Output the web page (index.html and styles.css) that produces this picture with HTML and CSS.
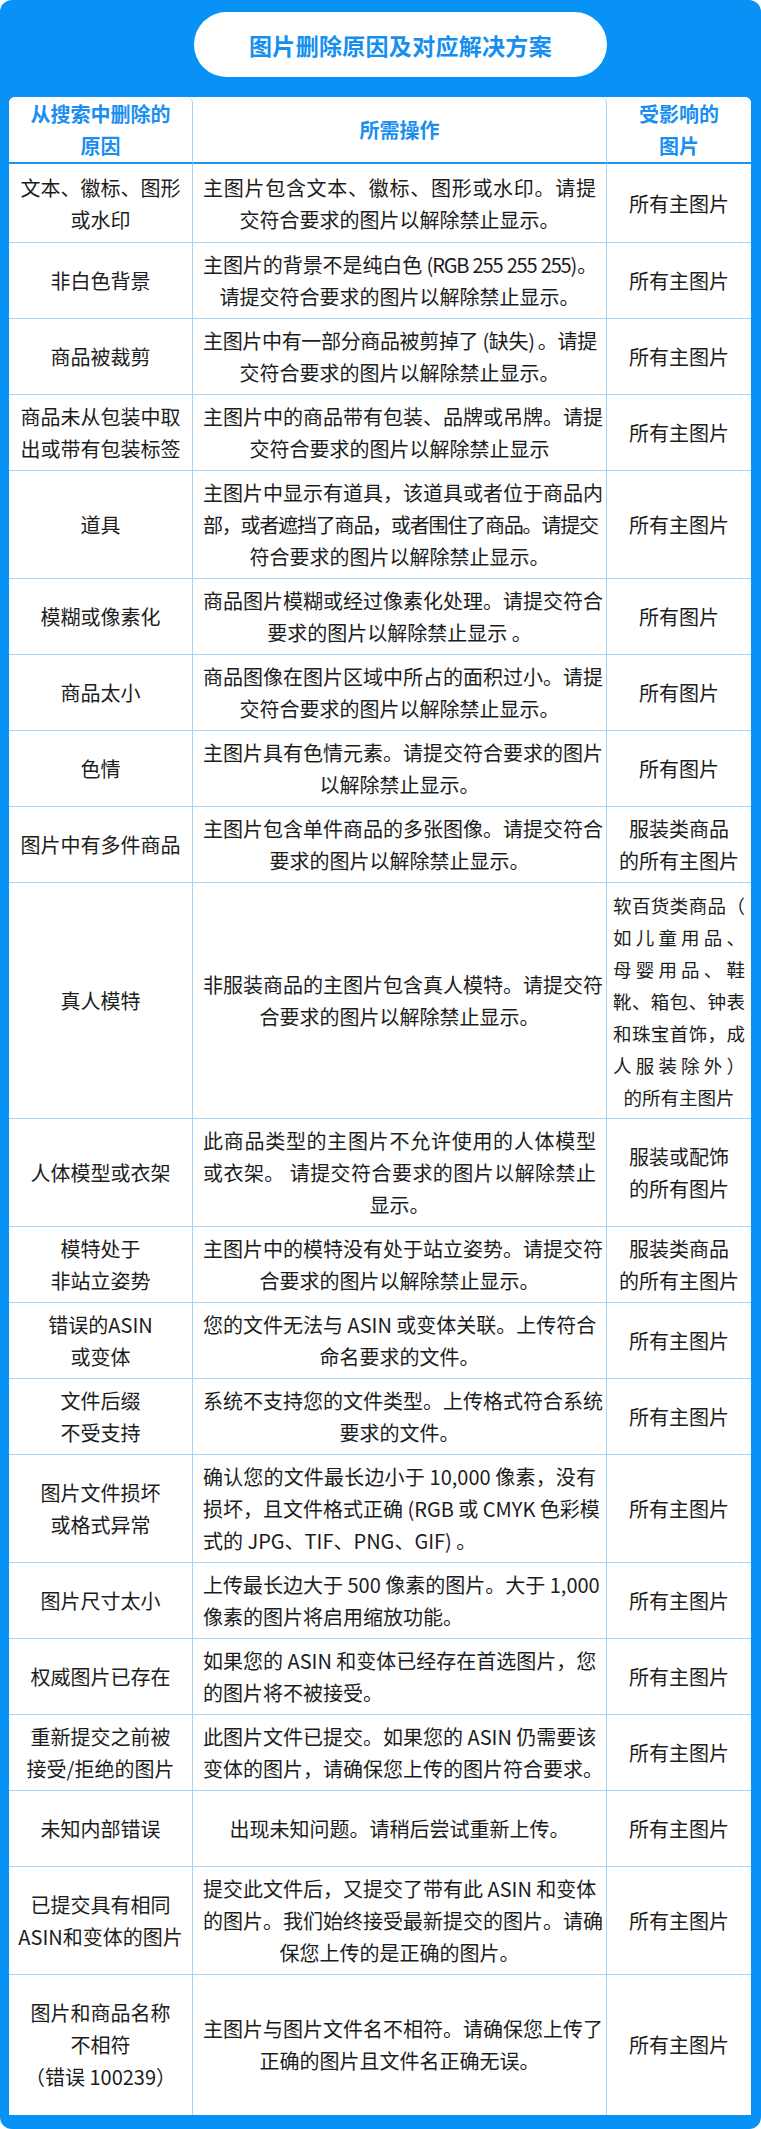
FILE: index.html
```html
<!DOCTYPE html>
<html lang="zh-CN">
<head>
<meta charset="utf-8">
<title>图片删除原因及对应解决方案</title>
<link rel="stylesheet" href="styles.css">
</head>
<body>
<div class="frame">
  <div class="title-row">
    <div class="pill">图片删除原因及对应解决方案</div>
  </div>
  <div class="table">
    <div class="row head">
      <div class="cell c1">从搜索中删除的<br>原因</div>
      <div class="cell c2">所需操作</div>
      <div class="cell c3">受影响的<br>图片</div>
    </div>

    <div class="row r1">
      <div class="cell c1"><span class="ln">文本、徽标、图形</span><span class="ln">或水印</span></div>
      <div class="cell c2"><span class="ln j">主图片包含文本、徽标、图形或水印。请提</span><span class="ln">交符合要求的图片以解除禁止显示。</span></div>
      <div class="cell c3">所有主图片</div>
    </div>

    <div class="row">
      <div class="cell c1">非白色背景</div>
      <div class="cell c2"><span class="ln j tight">主图片的背景不是纯白色 (RGB 255 255 255)。</span><span class="ln">请提交符合要求的图片以解除禁止显示。</span></div>
      <div class="cell c3">所有主图片</div>
    </div>

    <div class="row">
      <div class="cell c1">商品被裁剪</div>
      <div class="cell c2"><span class="ln j tight">主图片中有一部分商品被剪掉了 (缺失) 。请提</span><span class="ln">交符合要求的图片以解除禁止显示。</span></div>
      <div class="cell c3">所有主图片</div>
    </div>

    <div class="row">
      <div class="cell c1"><span class="ln">商品未从包装中取</span><span class="ln">出或带有包装标签</span></div>
      <div class="cell c2"><span class="ln j">主图片中的商品带有包装、品牌或吊牌。请提</span><span class="ln">交符合要求的图片以解除禁止显示</span></div>
      <div class="cell c3">所有主图片</div>
    </div>

    <div class="row">
      <div class="cell c1">道具</div>
      <div class="cell c2"><span class="ln j">主图片中显示有道具，该道具或者位于商品内</span><span class="ln j tight">部，或者遮挡了商品，或者围住了商品。请提交</span><span class="ln">符合要求的图片以解除禁止显示。</span></div>
      <div class="cell c3">所有主图片</div>
    </div>

    <div class="row">
      <div class="cell c1">模糊或像素化</div>
      <div class="cell c2"><span class="ln j">商品图片模糊或经过像素化处理。请提交符合</span><span class="ln">要求的图片以解除禁止显示 。</span></div>
      <div class="cell c3">所有图片</div>
    </div>

    <div class="row">
      <div class="cell c1">商品太小</div>
      <div class="cell c2"><span class="ln j">商品图像在图片区域中所占的面积过小。请提</span><span class="ln">交符合要求的图片以解除禁止显示。</span></div>
      <div class="cell c3">所有图片</div>
    </div>

    <div class="row">
      <div class="cell c1">色情</div>
      <div class="cell c2"><span class="ln j">主图片具有色情元素。请提交符合要求的图片</span><span class="ln">以解除禁止显示。</span></div>
      <div class="cell c3">所有图片</div>
    </div>

    <div class="row">
      <div class="cell c1">图片中有多件商品</div>
      <div class="cell c2"><span class="ln j">主图片包含单件商品的多张图像。请提交符合</span><span class="ln">要求的图片以解除禁止显示。</span></div>
      <div class="cell c3"><span class="ln">服装类商品</span><span class="ln">的所有主图片</span></div>
    </div>

    <div class="row">
      <div class="cell c1">真人模特</div>
      <div class="cell c2"><span class="ln j">非服装商品的主图片包含真人模特。请提交符</span><span class="ln">合要求的图片以解除禁止显示。</span></div>
      <div class="cell c3 small"><span class="ln j">软百货类商品（</span><span class="ln j">如儿童用品、</span><span class="ln j">母婴用品、鞋</span><span class="ln j">靴、箱包、钟表</span><span class="ln j">和珠宝首饰，成</span><span class="ln j">人服装除外）</span><span class="ln">的所有主图片</span></div>
    </div>

    <div class="row">
      <div class="cell c1">人体模型或衣架</div>
      <div class="cell c2"><span class="ln j">此商品类型的主图片不允许使用的人体模型</span><span class="ln j">或衣架。 请提交符合要求的图片以解除禁止</span><span class="ln">显示。</span></div>
      <div class="cell c3"><span class="ln">服装或配饰</span><span class="ln">的所有图片</span></div>
    </div>

    <div class="row">
      <div class="cell c1"><span class="ln">模特处于</span><span class="ln">非站立姿势</span></div>
      <div class="cell c2"><span class="ln j">主图片中的模特没有处于站立姿势。请提交符</span><span class="ln">合要求的图片以解除禁止显示。</span></div>
      <div class="cell c3"><span class="ln">服装类商品</span><span class="ln">的所有主图片</span></div>
    </div>

    <div class="row">
      <div class="cell c1"><span class="ln">错误的ASIN</span><span class="ln">或变体</span></div>
      <div class="cell c2"><span class="ln j">您的文件无法与 ASIN 或变体关联。上传符合</span><span class="ln">命名要求的文件。</span></div>
      <div class="cell c3">所有主图片</div>
    </div>

    <div class="row">
      <div class="cell c1"><span class="ln">文件后缀</span><span class="ln">不受支持</span></div>
      <div class="cell c2"><span class="ln j">系统不支持您的文件类型。上传格式符合系统</span><span class="ln">要求的文件。</span></div>
      <div class="cell c3">所有主图片</div>
    </div>

    <div class="row">
      <div class="cell c1"><span class="ln">图片文件损坏</span><span class="ln">或格式异常</span></div>
      <div class="cell c2"><span class="ln j">确认您的文件最长边小于 10,000 像素，没有</span><span class="ln j">损坏，且文件格式正确 (RGB 或 CMYK 色彩模</span><span class="ln l">式的 JPG、TIF、PNG、GIF) 。</span></div>
      <div class="cell c3">所有主图片</div>
    </div>

    <div class="row">
      <div class="cell c1">图片尺寸太小</div>
      <div class="cell c2"><span class="ln j">上传最长边大于 500 像素的图片。大于 1,000</span><span class="ln l">像素的图片将启用缩放功能。</span></div>
      <div class="cell c3">所有主图片</div>
    </div>

    <div class="row">
      <div class="cell c1">权威图片已存在</div>
      <div class="cell c2"><span class="ln j">如果您的 ASIN 和变体已经存在首选图片，您</span><span class="ln l">的图片将不被接受。</span></div>
      <div class="cell c3">所有主图片</div>
    </div>

    <div class="row">
      <div class="cell c1"><span class="ln">重新提交之前被</span><span class="ln">接受/拒绝的图片</span></div>
      <div class="cell c2"><span class="ln j">此图片文件已提交。如果您的 ASIN 仍需要该</span><span class="ln j">变体的图片，请确保您上传的图片符合要求。</span></div>
      <div class="cell c3">所有主图片</div>
    </div>

    <div class="row">
      <div class="cell c1">未知内部错误</div>
      <div class="cell c2">出现未知问题。请稍后尝试重新上传。</div>
      <div class="cell c3">所有主图片</div>
    </div>

    <div class="row">
      <div class="cell c1"><span class="ln">已提交具有相同</span><span class="ln">ASIN和变体的图片</span></div>
      <div class="cell c2"><span class="ln j">提交此文件后，又提交了带有此 ASIN 和变体</span><span class="ln j">的图片。我们始终接受最新提交的图片。请确</span><span class="ln">保您上传的是正确的图片。</span></div>
      <div class="cell c3">所有主图片</div>
    </div>

    <div class="row last">
      <div class="cell c1"><span class="ln">图片和商品名称</span><span class="ln">不相符</span><span class="ln">（错误 100239）</span></div>
      <div class="cell c2"><span class="ln j">主图片与图片文件名不相符。请确保您上传了</span><span class="ln">正确的图片且文件名正确无误。</span></div>
      <div class="cell c3">所有主图片</div>
    </div>
  </div>
</div>
</body>
</html>
```

FILE: styles.css
```css
* {
  box-sizing: border-box;
}

body {
  margin: 0;
  background: #ffffff;
  font-family: "Noto Sans CJK SC", "Noto Sans", sans-serif;
}

.frame {
  width: 761px;
  height: 2129px;
  background: #0892f6;
  border-radius: 12px;
  padding: 12px 10px 11px 9px;
}

.title-row {
  display: grid;
  grid-template-columns: 185px 413px 1fr;
  height: 65px;
  margin-bottom: 20px;
}

.pill {
  grid-column: 2;
  background: #ffffff;
  border-radius: 33px;
  display: flex;
  align-items: center;
  justify-content: center;
  font-size: 23px;
  font-weight: 700;
  color: #1590f0;
  letter-spacing: 0.3px;
}

.table {
  background: #ffffff;
  border-radius: 6px 6px 0 0;
}

.row {
  display: grid;
  grid-template-columns: 184px 414px 144px;
}

.cell {
  display: flex;
  flex-direction: column;
  justify-content: center;
  text-align: center;
  font-size: 20px;
  line-height: 32px;
  color: #1c1c1c;
  background: #ffffff;
  min-height: 76px;
  padding: 6px 4px 5px;
  border-bottom: 1px solid #a6d3f8;
}

.c1,
.c2 {
  border-right: 1px solid #a6d3f8;
}

.c2 {
  padding-left: 10px;
  padding-right: 10px;
}

.head .cell {
  min-height: 0;
  height: 67px;
  padding: 1px 4px 0;
  border-radius: 6px 6px 0 0;
  border-bottom: 2px solid #1d95f2;
  color: #1a8ff0;
  font-weight: 700;
}

.r1 .cell {
  padding-top: 8px;
  padding-bottom: 6px;
}

.last .cell {
  padding-top: 22px;
  padding-bottom: 22px;
  border-bottom: none;
}

.ln {
  display: block;
  white-space: nowrap;
}

.j {
  text-align: justify;
  text-align-last: justify;
}

.l {
  text-align: left;
}

.tight {
  letter-spacing: -1.2px;
}

.small {
  font-size: 18.5px;
  padding-left: 6px;
  padding-right: 6px;
}
```
